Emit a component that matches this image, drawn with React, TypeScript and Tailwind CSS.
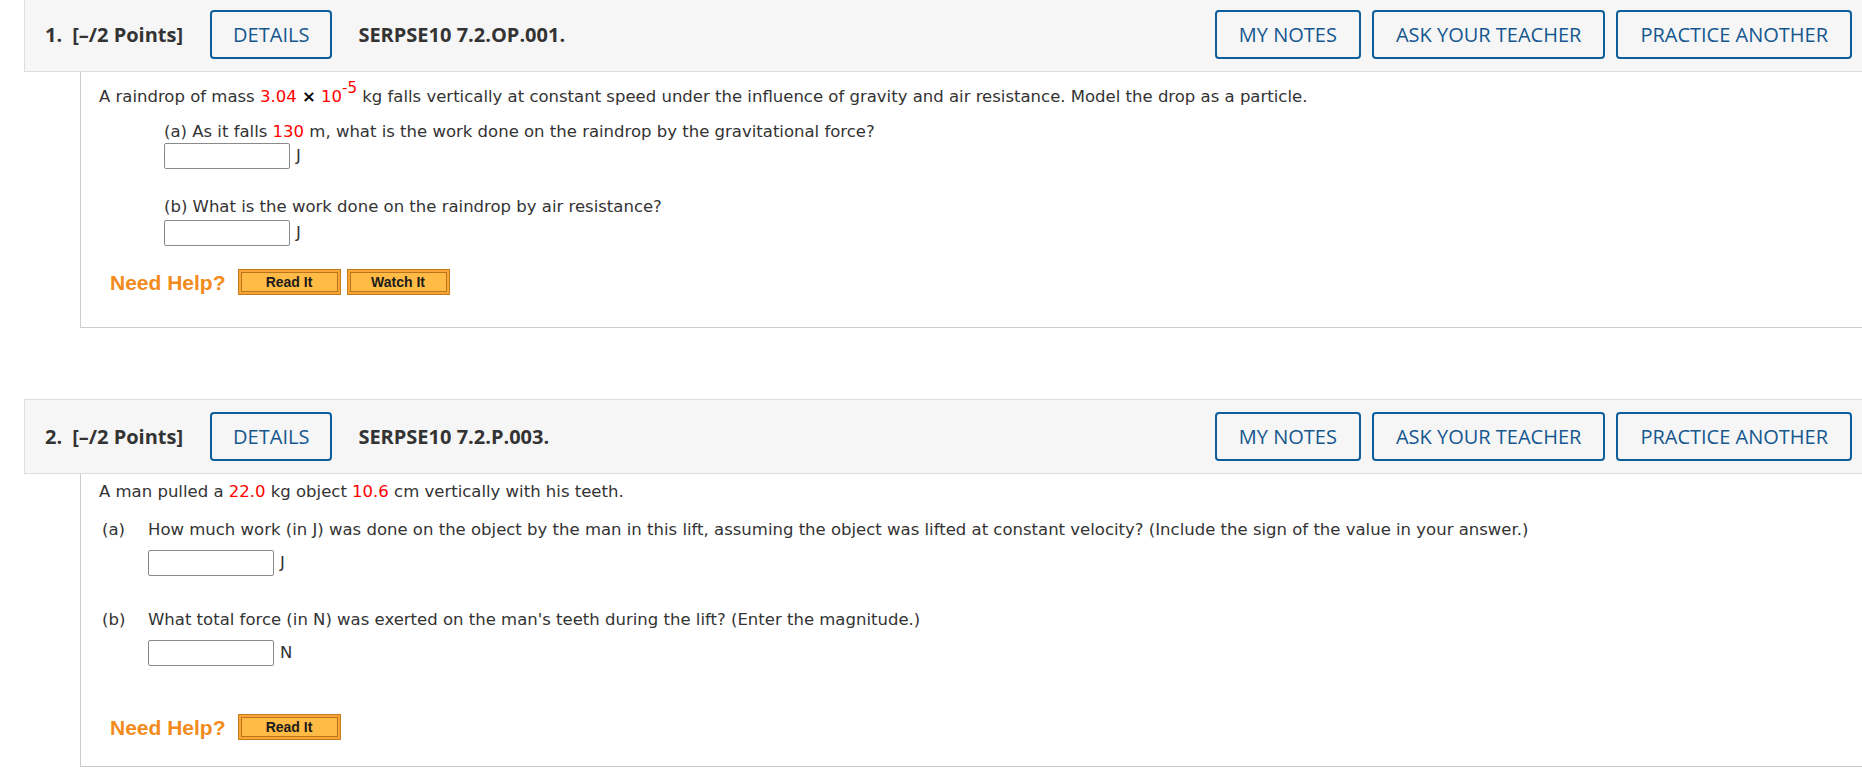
import React from "react";

function HeadBtn({ children, className = "px-[22px]" }: { children: React.ReactNode; className?: string }) {
  return (
    <button
      type="button"
      className={
        "h-[49px] border-2 border-[#0e5e9c] rounded-[4px] bg-transparent text-[#15578f] text-[20px] leading-none font-medium whitespace-nowrap " +
        className
      }
    >
      {children}
    </button>
  );
}

function Header({ num, code, className = "" }: { num: string; code: string; className?: string }) {
  return (
    <div
      className={
        "ml-[24px] h-[75px] border border-r-0 border-[#dddddd] bg-[#f6f6f6] flex items-center pl-[20px] pr-[10px] font-['Open_Sans',sans-serif] text-[20px] text-[#333333] " +
        className
      }
    >
      <span className="font-bold">{num}</span>
      <span className="font-bold ml-[10px]">[–/2 Points]</span>
      <HeadBtn className="ml-[27px] px-[21px]">DETAILS</HeadBtn>
      <span className="font-bold ml-[26px]">{code}</span>
      <div className="ml-auto flex gap-[11px]">
        <HeadBtn>MY NOTES</HeadBtn>
        <HeadBtn>ASK YOUR TEACHER</HeadBtn>
        <HeadBtn>PRACTICE ANOTHER</HeadBtn>
      </div>
    </div>
  );
}

function Answer({ unit }: { unit: string }) {
  return (
    <div className="flex items-center">
      <div className="w-[126px] h-[26px] border border-[#8a8a8a] rounded-[2px] bg-white" />
      <span className="ml-[6px]">{unit}</span>
    </div>
  );
}

function HelpBtn({ label }: { label: string }) {
  return (
    <div className="w-[103px] h-[26px] border border-[#c77a1e] bg-[#f8a536] p-[2px]">
      <div className="w-full h-full border border-[#b9741c] bg-[#ffbb45] flex items-center justify-center font-['Liberation_Sans',Arial,sans-serif] font-bold text-[14px] text-[#1b1b1b] leading-none">
        {label}
      </div>
    </div>
  );
}

function NeedHelp({ watch }: { watch?: boolean }) {
  return (
    <div className="flex items-center ml-[11px]">
      <span className="font-['Liberation_Sans',Arial,sans-serif] font-bold text-[21px] leading-none text-[#f38b1c]">
        Need Help?
      </span>
      <div className="ml-[12px] flex gap-[6px]">
        <HelpBtn label="Read It" />
        {watch && <HelpBtn label="Watch It" />}
      </div>
    </div>
  );
}

const R = "text-[#ff0000]";

export default function App() {
  return (
    <div className="min-h-[768px] bg-white overflow-hidden">
      <Header num="1." code="SERPSE10 7.2.OP.001." className="-mt-[3px]" />
      <div className="ml-[80px] border-l border-b border-[#cccccc] pl-[18px] pt-[15px] pb-[32px] font-['DejaVu_Sans',Verdana,sans-serif] text-[16.5px] leading-[20px] text-[#333333]">
        <p>
          A raindrop of mass <span className={R}>3.04</span> <b className="text-black">×</b>{" "}
          <span className={R}>
            10<sup className="text-[15px] -top-[0.6em]">-5</sup>
          </span>{" "}
          kg falls vertically at constant speed under the influence of gravity and air resistance. Model the drop as a
          particle.
        </p>
        <div className="ml-[65px] mt-[15px]">
          <p>
            (a) As it falls <span className={R}>130</span> m, what is the work done on the raindrop by the gravitational
            force?
          </p>
          <div className="mt-[1px]">
            <Answer unit="J" />
          </div>
          <p className="mt-[28px]">(b) What is the work done on the raindrop by air resistance?</p>
          <div className="mt-[3px]">
            <Answer unit="J" />
          </div>
        </div>
        <div className="mt-[23px]">
          <NeedHelp watch />
        </div>
      </div>

      <Header num="2." code="SERPSE10 7.2.P.003." className="mt-[71px]" />
      <div className="ml-[80px] border-l border-b border-[#cccccc] pl-[18px] pt-[8px] pb-[26px] font-['DejaVu_Sans',Verdana,sans-serif] text-[16.5px] leading-[20px] text-[#333333]">
        <p>
          A man pulled a <span className={R}>22.0</span> kg object <span className={R}>10.6</span> cm vertically with his
          teeth.
        </p>
        <div className="mt-[18px] flex">
          <span className="ml-[3px] w-[46px] shrink-0">(a)</span>
          <div>
            <p>
              How much work (in J) was done on the object by the man in this lift, assuming the object was lifted at
              constant velocity? (Include the sign of the value in your answer.)
            </p>
            <div className="mt-[10px]">
              <Answer unit="J" />
            </div>
          </div>
        </div>
        <div className="mt-[34px] flex">
          <span className="ml-[3px] w-[46px] shrink-0">(b)</span>
          <div>
            <p>What total force (in N) was exerted on the man's teeth during the lift? (Enter the magnitude.)</p>
            <div className="mt-[10px]">
              <Answer unit="N" />
            </div>
          </div>
        </div>
        <div className="mt-[48px]">
          <NeedHelp />
        </div>
      </div>
    </div>
  );
}
